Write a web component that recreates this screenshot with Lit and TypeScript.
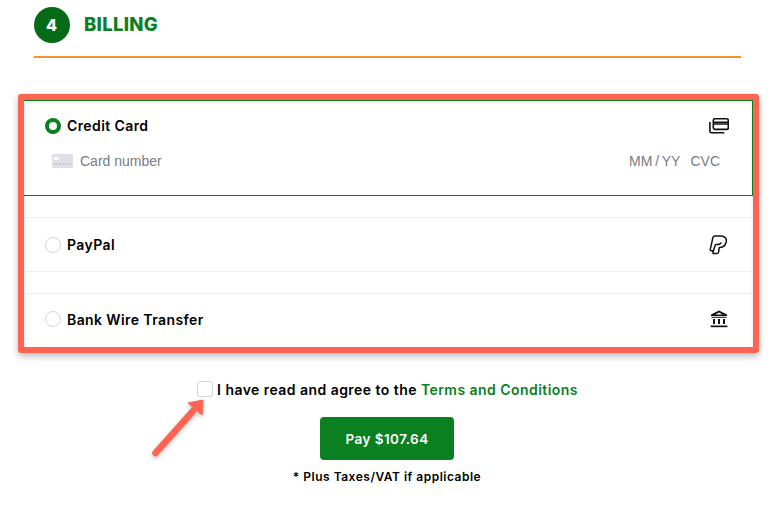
import { LitElement, html, css, svg } from "lit";
import { customElement } from "lit/decorators.js";

const cardIcon = html`<svg width="20" height="16" viewBox="0 0 20 16" fill="none" stroke="#111" stroke-width="1.6"><rect x="4.3" y="0.8" width="15" height="10.6" rx="1.6"/><path d="M4.3 4.3h15M4.3 6h15" stroke-width="1.4"/><path d="M0.9 4v9.2a1.6 1.6 0 0 0 1.6 1.6h12.8"/></svg>`;
const paypalIcon = html`<svg class="pp" width="18" height="20" viewBox="0 0 18 20" fill="none" stroke="#111" stroke-width="1.5" stroke-linejoin="round" stroke-linecap="round"><path d="M6.3 1H12c4 0 5.9 2.8 5.2 6-.8 3.3-3.2 5.4-6.2 5.4h-.7l-.7 4.6c-.1 1-.8 1.6-1.8 1.6H5c-.8 0-1.2-.6-1-1.3l.4-1.5H2.5c-.9 0-1.4-.6-1.2-1.5L3.8 2.8C4 1.7 5 1 6.3 1Z"/><path d="M12 8c-.8 1-2 1.6-3.4 1.6H7.3c-.7 0-1.1.4-1.3 1.1l-1.6 5.1"/></svg>`;
const bankIcon = html`<svg width="18" height="18" viewBox="0 0 18 18" fill="#111"><path d="M9 .6 17 4.6v1.4H1V4.6Zm0 1.9L5.4 4.4h7.2Z" fill-rule="evenodd"/><rect x="1.5" y="6.8" width="15" height="1"/><rect x="3" y="9" width="2" height="5"/><rect x="8" y="9" width="2" height="5"/><rect x="13" y="9" width="2" height="5"/><rect x="0.6" y="15.5" width="16.8" height="1.7"/></svg>`;

@customElement("app-root")
export class AppRoot extends LitElement {
  static styles = css`
    :host { display: block; position: relative; width: 781px; height: 509px; overflow: hidden; background: #fff; font-family: "Inter", "Open Sans", sans-serif; color: #000; }
    .head { display: flex; align-items: center; gap: 14px; margin: 0 40px 0 34px; padding: 7px 0 13px; border-bottom: 2px solid #f7932f; height: 36px; }
    .step { width: 36px; height: 36px; border-radius: 50%; background: #056b16; color: #fff; display: flex; align-items: center; justify-content: center; font-weight: 800; font-size: 16px; padding-right: 1px; box-sizing: border-box; }
    .title { font-size: 18.5px; font-weight: 800; color: #0a8020; letter-spacing: .3px; margin-top: -2px; }
    .box { box-sizing: border-box; margin: 36px 22px 0 18px; height: 259px; border: 6px solid #ff6452; border-radius: 3px; box-shadow: 0 3px 7px rgba(0,0,0,.28), inset 0 2px 4px rgba(0,0,0,.12); display: flex; flex-direction: column; background: #fff; }
    .row { display: flex; align-items: center; justify-content: space-between; padding: 0 25px 0 21px; box-sizing: border-box; }
    .lbl { display: flex; align-items: center; gap: 6px; font-size: 14px; font-weight: 600; letter-spacing: .4px; }
    .radio { box-sizing: border-box; width: 16px; height: 16px; border-radius: 50%; border: 1px solid #d5d5da; background: #fff; }
    .radio.on { border: 4.5px solid #0a8020; }
    .cc { height: 96px; border: 1px solid #0a7a1e; border-left: 0; flex: none; display: flex; flex-direction: column; box-sizing: border-box; }
    .cc .row { height: 49px; padding: 0 23px 0 21px; }
    .cc .fields { display: flex; justify-content: space-between; align-items: center; padding: 1px 32px 0 28px; font-family: "Liberation Sans", Arial, sans-serif; font-size: 14px; color: #7b7b80; height: 20px; }
    .num { display: flex; align-items: center; gap: 7px; }
    .exp { display: flex; gap: 10px; }
    .mm { word-spacing: -1px; }
    .pp { margin-right: 1px; }
    .gap1 { height: 21px; flex: none; border-bottom: 1px solid #ecedf2; box-sizing: content-box; }
    .paypal { height: 54px; flex: none; border-bottom: 1px solid #ecedf2; }
    .gap2 { height: 21px; flex: none; border-bottom: 1px solid #ecedf2; }
    .bank { flex: 1; padding-bottom: 3px; }
    .agree { display: flex; align-items: center; justify-content: center; gap: 4px; margin-top: 27px; padding-right: 6px; font-size: 14px; font-weight: 600; height: 18px; letter-spacing: .45px; }
    .cb { box-sizing: border-box; width: 16px; height: 16px; border: 1px solid #d5d5da; border-radius: 3px; }
    .agree a { color: #0a8020; text-decoration: none; }
    .actions { display: flex; flex-direction: column; align-items: center; padding-right: 7px; }
    .pay { margin-top: 19px; width: 134px; height: 43px; border: 0; border-radius: 4px; background: #0a8020; color: #fff; font: 600 13.5px "Inter", sans-serif; letter-spacing: .45px; padding: 0; }
    .note { margin-top: 9px; font-size: 12px; font-weight: 600; line-height: 16px; letter-spacing: .5px; }
    .arrow { position: absolute; left: 145px; top: 395px; filter: drop-shadow(0 2px 2px rgba(0,0,0,.25)); }
  `;
  render() {
    return html`
      <div class="head"><div class="step">4</div><div class="title">BILLING</div></div>
      <div class="box">
        <div class="cc">
          <div class="row"><div class="lbl"><span class="radio on"></span>Credit Card</div>${cardIcon}</div>
          <div class="fields">
            <div class="num">
              <svg width="21" height="14" viewBox="0 0 21 14"><rect width="21" height="14" rx="1.5" fill="#dfe0e7"/><rect x="2" y="3" width="5" height="3" fill="#fafafc"/><path d="M2 10h17" stroke="#b9bac6" stroke-width="1" stroke-dasharray="3.2 1"/></svg>
              <span>Card number</span>
            </div>
            <div class="exp"><span class="mm">MM / YY</span><span>CVC</span></div>
          </div>
        </div>
        <div class="gap1"></div>
        <div class="row paypal"><div class="lbl"><span class="radio"></span>PayPal</div>${paypalIcon}</div>
        <div class="gap2"></div>
        <div class="row bank"><div class="lbl"><span class="radio"></span>Bank Wire Transfer</div>${bankIcon}</div>
      </div>
      <div class="agree"><span class="cb"></span><span>I have read and agree to the <a>Terms and Conditions</a></span></div>
      <div class="actions">
        <button class="pay">Pay $107.64</button>
        <div class="note">* Plus Taxes/VAT if applicable</div>
      </div>
      <svg class="arrow" width="66" height="68" viewBox="0 0 66 68" fill="none">
        ${svg`<path d="M10.5 58 48 16" stroke="#ff6452" stroke-width="6.5" stroke-linecap="round"/><path d="M58 5 43 8 57 20Z" fill="#ff6452" stroke="#ff6452" stroke-width="1" stroke-linejoin="round"/>`}
      </svg>
    `;
  }
}
